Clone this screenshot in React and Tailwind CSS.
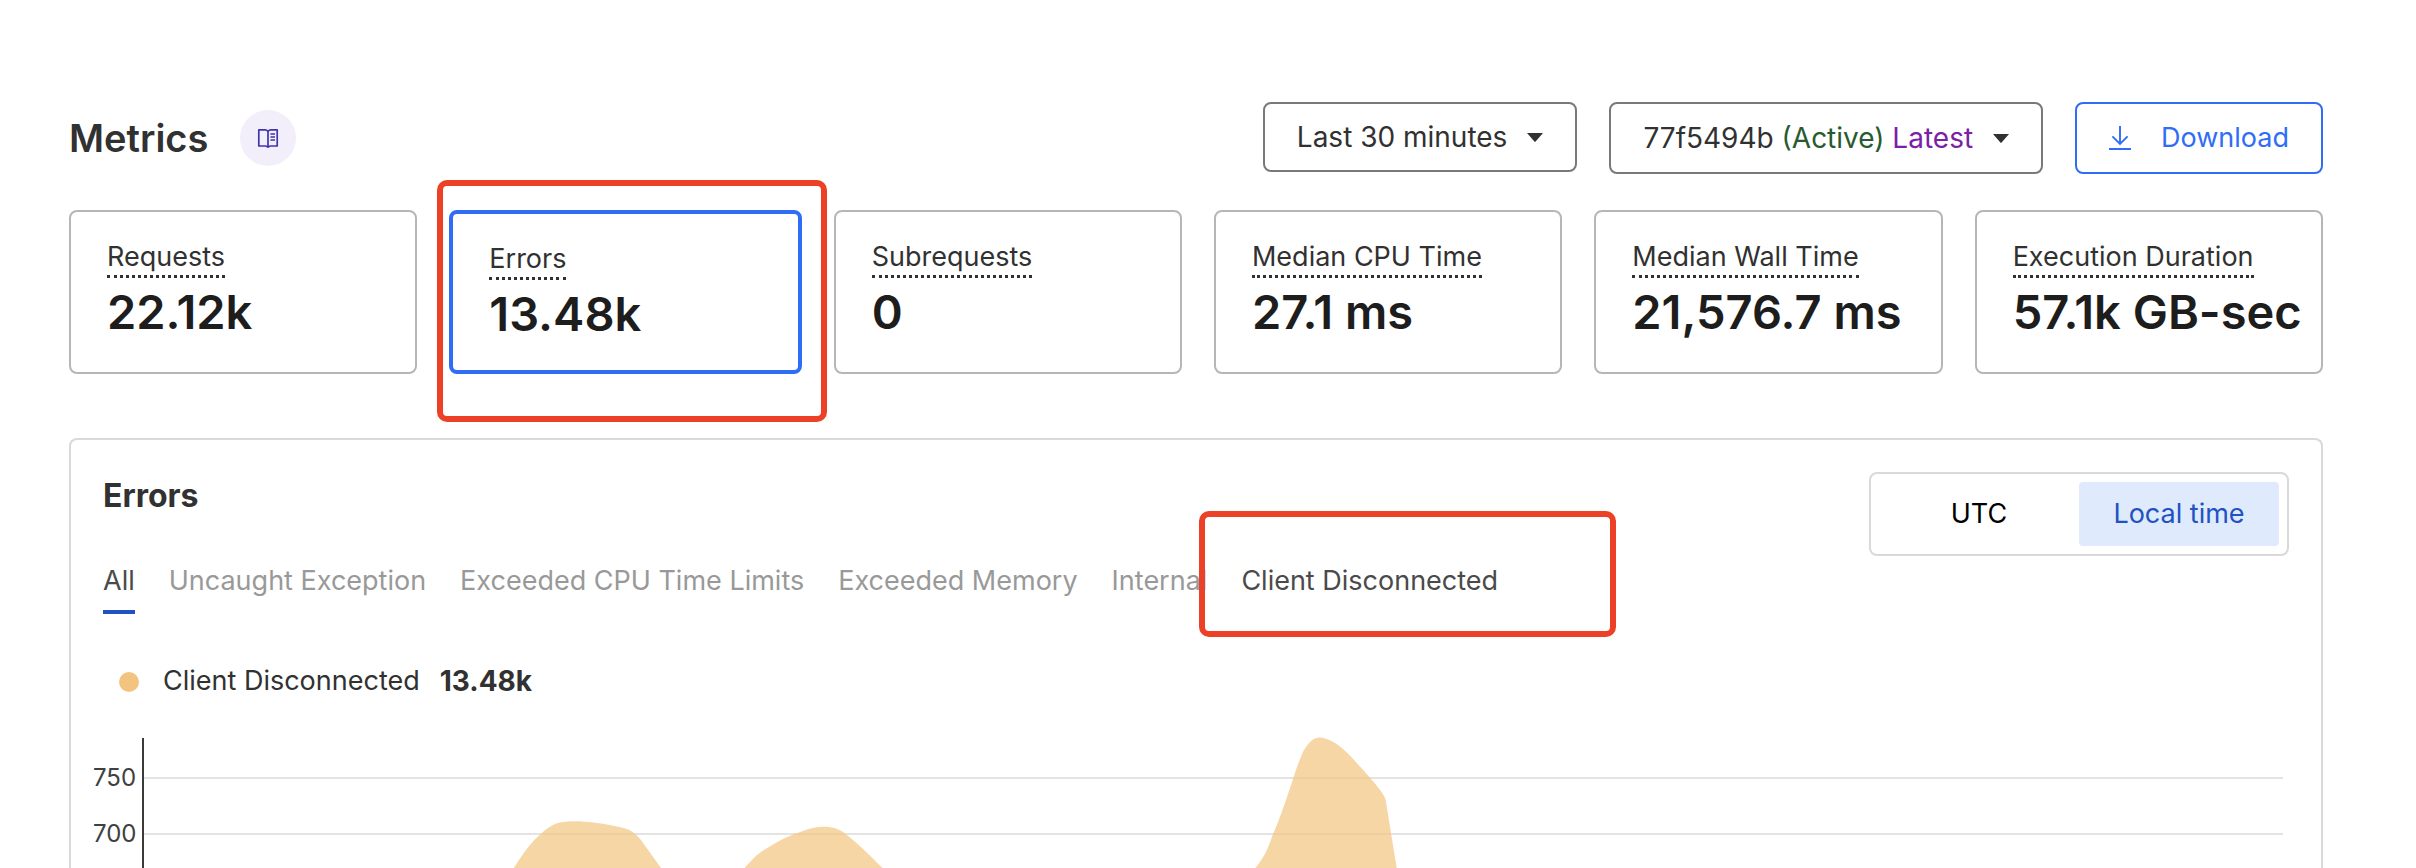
const cards = [
  { label: "Requests", value: "22.12k" },
  { label: "Errors", value: "13.48k", selected: true },
  { label: "Subrequests", value: "0" },
  { label: "Median CPU Time", value: "27.1 ms" },
  { label: "Median Wall Time", value: "21,576.7 ms" },
  { label: "Execution Duration", value: "57.1k GB-sec" },
];

const tabs = [
  { label: "All", active: true },
  { label: "Uncaught Exception" },
  { label: "Exceeded CPU Time Limits" },
  { label: "Exceeded Memory" },
  { label: "Internal" },
  { label: "Client Disconnected", enabled: true },
];

function BookIcon() {
  return (
    <svg width="24" height="24" viewBox="0 0 24 24" fill="none" stroke="#4034b0" strokeWidth="1.7" strokeLinejoin="round" aria-hidden="true">
      <path d="M12 5.8C11.400 4.200 10.400 3.800 9.400 3.800H2.800v16.200h6.800c1.200 0 1.400 1 2.400 1s1.200-1 2.400-1h6.800v-16.200h-6.600c-1 0-2 .4-2.600 2v15" />
      <path d="M14.400 8H19M14.400 11H19M14.400 14H19" />
    </svg>
  );
}

function DownloadIcon() {
  return (
    <svg width="22" height="24" viewBox="0 0 22 24" fill="none" stroke="#2f6df6" strokeWidth="2" aria-hidden="true">
      <path d="M11 0v18M3.400 10.400L11 18l7.600-7.600" strokeWidth="1.9" />
      <path d="M0 23h22" />
    </svg>
  );
}

function Caret() {
  return (
    <svg width="16" height="9" viewBox="0 0 16 9" fill="#313131" aria-hidden="true">
      <path d="M0 0h16L8.600 8.500c-.4.500-.8.500-1.200 0z" />
    </svg>
  );
}

function Highlight({ className }) {
  return (
    <span aria-hidden="true" className={`pointer-events-none absolute rounded-[10px] border-6 border-[#ec4127] ${className}`} />
  );
}

function MetricCard({ label, value, selected }) {
  return (
    <div className={`relative flex min-w-0 flex-1 flex-col rounded-lg px-9 pt-[27px] pb-8 ${selected ? "border-4 border-[#2f6df6]" : "border-2 border-[#b6b6b6]"}`}>
      <span className="self-start border-b-3 border-dotted border-[#313131] leading-9 whitespace-nowrap text-[#313131]">{label}</span>
      <span className="text-[47px] leading-[68px] font-semibold whitespace-nowrap text-[#1d1d1d]">{value}</span>
      {selected && <Highlight className="-top-[34px] -right-[29px] -bottom-[52px] -left-4" />}
    </div>
  );
}

function Chart() {
  return (
    <div className="flex pr-[38px] pl-[22px]">
      <div className="flex w-[43px] shrink-0 flex-col pt-[27px] text-right text-2xl text-[#404040]">
        <span className="h-14 leading-[28px]">750</span>
        <span className="leading-[28px]">700</span>
      </div>
      <svg className="ml-1.5 h-[131px] min-w-0 flex-1" viewBox="0 0 2141 131" preserveAspectRatio="none" role="img" aria-label="Client Disconnected errors over time">
        <path d="M2 41H2141M2 97H2141" stroke="#e3e3e3" strokeWidth="2" />
        <path
          fill="#f3c47f"
          fillOpacity="0.7"
          d="M371.8 131C382 115 391 103 399 97C405 91 412 86.500 418 85.500C428 83.500 441 84 453 85.700C464 87 474 89 484 91.700C490 93.500 495 98 499 103L519 131ZM602.500 131C610 123 615 117 622 113C634 105.500 647 98 659 94.700C668 91 677 89.200 684 89.800C692 90 699 93 705 98C720 110 730 121 740.600 131ZM1113.300 131C1121 122 1126 112 1130 99.700C1138 82 1145 60 1151.300 41.300C1154 32 1158 22 1161 14.700C1165 8 1169 3 1173 1.500C1178 -1 1184 1 1191 4.700C1199 9 1207 17 1214.700 26C1224 36 1232 45 1238 53C1241 57 1243 60 1243.700 63L1254.700 131Z"
        />
        <path d="M1 1V131" stroke="#3a3a3a" strokeWidth="2" />
      </svg>
    </div>
  );
}

export default function App() {
  return (
    <main className="flex min-h-screen flex-col overflow-hidden bg-white pt-[102px] pr-[93px] pl-[69px] font-['Inter','Liberation_Sans',sans-serif] text-[27px] text-[#313131]">
      <header className="flex h-[72px] items-start justify-between">
        <div className="flex h-full items-center gap-8">
          <h1 className="text-[38px] leading-none font-semibold">Metrics</h1>
          <a href="#docs" aria-label="Metrics documentation" className="flex size-14 items-center justify-center rounded-full bg-[#f2effb]">
            <BookIcon />
          </a>
        </div>
        <div className="flex items-start gap-8">
          <button type="button" className="flex h-[70px] items-center gap-5 rounded-lg border-2 border-[#797979] px-8 text-[28px]">
            Last 30 minutes
            <Caret />
          </button>
          <button type="button" className="flex h-[72px] items-center gap-5 rounded-lg border-2 border-[#797979] px-8 text-[28px]">
            <span>
              77f5494b <span className="text-[#285a2f]">(Active)</span> <span className="text-[#7c20a6]">Latest</span>
            </span>
            <Caret />
          </button>
          <button type="button" className="flex h-[72px] items-center gap-[30px] rounded-lg border-2 border-[#2f6df6] px-8 text-[#2f6df6]">
            <DownloadIcon />
            Download
          </button>
        </div>
      </header>

      <section aria-label="Summary" className="mt-9 flex h-[164px] gap-8">
        {cards.map((card) => (
          <MetricCard key={card.label} {...card} />
        ))}
      </section>

      <section aria-label="Errors" className="mt-16 flex-1 rounded-t-lg border-2 border-b-0 border-[#d9d9d9]">
        <div className="mt-8 flex h-[84px] items-start justify-between px-8">
          <h2 className="pt-1 text-[32px] leading-10 font-bold">Errors</h2>
          <div role="group" aria-label="Time zone" className="flex rounded-lg border-2 border-[#d9d9d9] p-2">
            <button type="button" aria-pressed="false" className="h-16 w-[200px] text-black">UTC</button>
            <button type="button" aria-pressed="true" className="h-16 w-[200px] rounded bg-[#dfeafc] text-[#2152c3]">Local time</button>
          </div>
        </div>
        <div role="tablist" className="flex items-start gap-[34px] px-8 whitespace-nowrap">
          {tabs.map(({ label, active, enabled }) => (
            <button
              key={label}
              type="button"
              role="tab"
              aria-selected={Boolean(active)}
              className={`relative h-[58px] border-b-4 pb-1 ${active ? "border-[#2152c3]" : "border-transparent"} ${active || enabled ? "text-[#4a4a4a]" : "text-[#999999]"}`}
            >
              {label}
              {enabled && <Highlight className="-top-[45px] -right-[118px] -bottom-[27px] -left-[42px]" />}
            </button>
          ))}
        </div>
        <div className="mt-11 flex h-12 items-center pl-12">
          <span className="mr-6 size-5 rounded-full bg-[#f3c47f]" />
          <span className="pb-0.5">Client Disconnected</span>
          <strong className="ml-5 pb-0.5 text-[28px] font-bold">13.48k</strong>
        </div>
        <div className="mt-[31px]">
          <Chart />
        </div>
      </section>
    </main>
  );
}
